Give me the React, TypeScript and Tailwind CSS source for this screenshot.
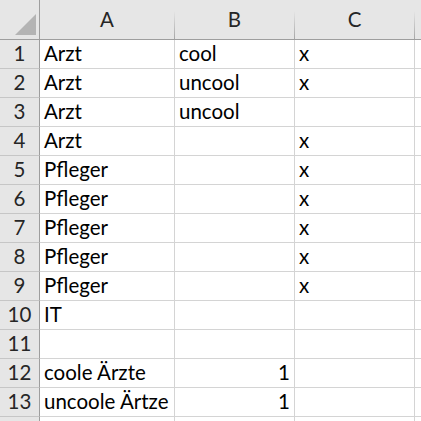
import React from 'react'

type Row = { a?: string; b?: string; bNum?: boolean; c?: string }

const rows: Row[] = [
  { a: 'Arzt', b: 'cool', c: 'x' },
  { a: 'Arzt', b: 'uncool', c: 'x' },
  { a: 'Arzt', b: 'uncool' },
  { a: 'Arzt', c: 'x' },
  { a: 'Pfleger', c: 'x' },
  { a: 'Pfleger', c: 'x' },
  { a: 'Pfleger', c: 'x' },
  { a: 'Pfleger', c: 'x' },
  { a: 'Pfleger', c: 'x' },
  { a: 'IT' },
  {},
  { a: 'coole Ärzte', b: '1', bNum: true },
  { a: 'uncoole Ärtze', b: '1', bNum: true },
  {},
]

function ColHeader({ label }: { label?: string }) {
  return (
    <div className="flex h-[40px] bg-[#e6e6e6] border-b border-[#9e9e9e]">
      <div className="flex-1 flex items-end justify-center pb-[4px] text-[#262626]">{label}</div>
      <div className="w-px mt-[11px] bg-gradient-to-b from-[#e6e6e6] to-[#a6a6a6]"></div>
    </div>
  )
}

function Cell({ children, right }: { children?: React.ReactNode; right?: boolean }) {
  return (
    <div
      className={
        'h-[29px] border-b border-r border-[#d4d4d4] bg-white flex items-end pb-[3px] px-[4px] leading-[24px] whitespace-nowrap ' +
        (right ? 'justify-end' : 'justify-start')
      }
    >
      {children}
    </div>
  )
}

export default function App() {
  return (
    <div
      className="w-[421px] h-[421px] overflow-hidden bg-white text-[20.5px] text-black"
      style={{ fontFamily: 'Lato, "Open Sans", sans-serif' }}
    >
      <div className="grid grid-cols-[40px_135px_120px_120px_1fr]">
        {/* corner */}
        <div className="h-[40px] bg-[#e6e6e6] border-b border-r border-[#9e9e9e] flex items-end justify-end pr-[3px] pb-[4px]">
          <svg width="21" height="21" viewBox="0 0 21 21">
            <polygon points="21,0 21,21 0,21" fill="#b4b4b4" />
          </svg>
        </div>
        <ColHeader label="A" />
        <ColHeader label="B" />
        <ColHeader label="C" />
        <ColHeader />

        {rows.map((r, i) => (
          <React.Fragment key={i}>
            <div className="h-[29px] bg-[#e6e6e6] border-b border-r border-b-[#c6c6c6] border-r-[#9e9e9e] flex items-end justify-center pb-[3px] leading-[24px] text-[#262626]">
              {i < 13 ? i + 1 : null}
            </div>
            <Cell>{r.a}</Cell>
            <Cell right={r.bNum}>{r.b}</Cell>
            <Cell>{r.c}</Cell>
            <Cell />
          </React.Fragment>
        ))}
      </div>
    </div>
  )
}
